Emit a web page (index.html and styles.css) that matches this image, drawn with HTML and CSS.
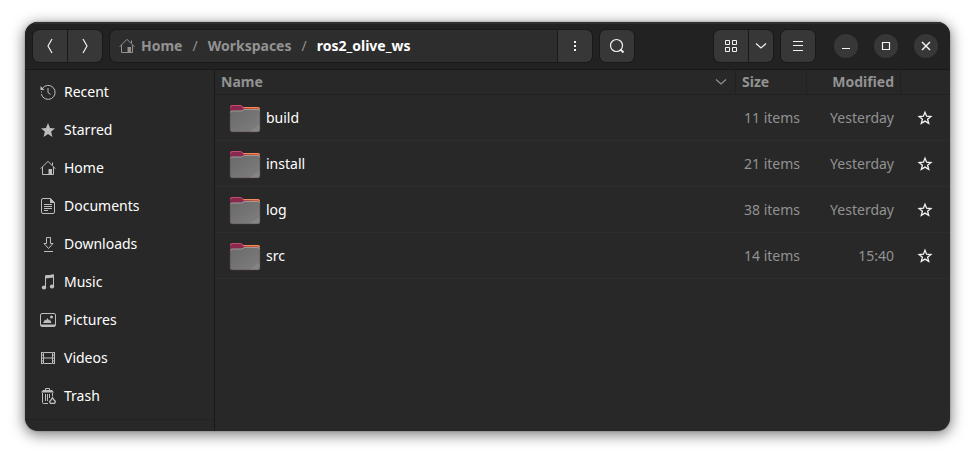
FILE: index.html
```html
<!DOCTYPE html>
<html lang="en">
<head>
<meta charset="utf-8">
<meta name="viewport" content="width=device-width, initial-scale=1">
<title>ros2_olive_ws</title>
<link rel="stylesheet" href="styles.css">
</head>
<body>
<svg class="defs" aria-hidden="true">
  <defs>
    <linearGradient id="flap" x1="0" x2="1"><stop offset="0" stop-color="#8b2850"/><stop offset=".4" stop-color="#b5384b"/><stop offset=".8" stop-color="#f0652f"/><stop offset="1" stop-color="#f0652f"/></linearGradient>
    <linearGradient id="front" x1="0" y1="0" x2="1" y2="1"><stop offset="0" stop-color="#696969"/><stop offset=".82" stop-color="#7b7b7b"/><stop offset=".83" stop-color="#858585"/><stop offset="1" stop-color="#858585"/></linearGradient>
    <symbol id="home" viewBox="0 0 16 16"><path d="M.7 8.700 8 1.300l7.300 7.400M2.500 7v7.500h11V7M12.500 5V2.500" fill="none" stroke="currentColor"/><path d="M8.500 9H12v5.500H8.500z" fill="currentColor"/></symbol>
    <symbol id="folder" viewBox="0 0 32 30"><path d="M1 4q0-2 2-2h8.500l3 2H29q2 0 2 2v20H1z" fill="url(#flap)"/><path d="M1 10V4q0-2 2-2h8.500l3 2-1 4H3z" fill="#8b2850"/><path d="M1.500 4.500q0-2 2-2h8l3 2" fill="none" stroke="#c0506c"/><path d="M14.500 4.500h14q2 0 2 2" fill="none" stroke="#f58a5c"/><path d="M1 9.500q0-2 2-2h9.500l3-1.500H29q2 0 2 2v19q0 2-2 2H3q-2 0-2-2z" fill="url(#front)" stroke="#543c43" stroke-width=".5"/><path d="M1.500 9.500Q1.500 8 3 8h9.500l3-1.500H29q1.500 0 1.500 1.500" fill="none" stroke="#a3979a"/></symbol>
    <symbol id="star" viewBox="0 0 16 16"><path d="m8 2.300 1.600 3.900 4.300.3-3.300 2.700 1.100 4.200L8 11.100l-3.700 2.300 1.100-4.200-3.300-2.700 4.300-.3z" fill="none" stroke="currentColor" stroke-width="1.300"/></symbol>
    <symbol id="down" viewBox="0 0 16 16"><path d="m3 5.500 5 4.500 5-4.500" fill="none" stroke="currentColor" stroke-width="1.200"/></symbol>
  </defs>
</svg>
<div class="window">
  <header class="toolbar">
    <div class="group">
      <button class="btn" aria-label="Back"><svg viewBox="0 0 16 16"><path d="M10 1 6 8l4 7" fill="none" stroke="currentColor" stroke-width="1.200"/></svg></button>
      <button class="btn" aria-label="Forward"><svg viewBox="0 0 16 16"><path d="m6 1 4 7-4 7" fill="none" stroke="currentColor" stroke-width="1.200"/></svg></button>
    </div>
    <div class="group location">
      <nav class="path" aria-label="Location">
        <a href="#home"><svg><use href="#home"/></svg>Home</a><span>/</span><a href="#workspaces">Workspaces</a><span>/</span><a href="#ws" class="current" aria-current="page">ros2_olive_ws</a>
      </nav>
      <button class="btn" aria-label="Folder menu"><svg viewBox="0 0 16 16"><path d="M7 3h2v2H7zM7 7h2v2H7zM7 11h2v2H7z" fill="currentColor"/></svg></button>
    </div>
    <div class="group"><button class="btn" aria-label="Search"><svg viewBox="0 0 16 16"><circle cx="7.500" cy="7.500" r="6" fill="none" stroke="currentColor" stroke-width="1.200"/><path d="m11.500 11.500 3 3" stroke="currentColor" stroke-width="1.800"/></svg></button></div>
    <div class="spacer"></div>
    <div class="group">
      <button class="btn" aria-label="Grid view"><svg viewBox="0 0 16 16"><path d="M2.500 2.500h4v4h-4zM9.500 2.500h4v4h-4zM2.500 9.500h4v4h-4zM9.500 9.500h4v4h-4z" fill="none" stroke="currentColor"/></svg></button>
      <button class="btn narrow" aria-label="View options"><svg><use href="#down"/></svg></button>
    </div>
    <div class="group"><button class="btn" aria-label="Main menu"><svg viewBox="0 0 16 16"><path d="M3 3.500h10M3 7.500h10M3 12.500h10" stroke="currentColor"/></svg></button></div>
    <div class="controls">
      <button class="round" aria-label="Minimize"><svg viewBox="0 0 16 16"><path d="M4 10.500h8" stroke="currentColor"/></svg></button>
      <button class="round" aria-label="Maximize"><svg viewBox="0 0 16 16"><path d="M4.500 4.500h7v7h-7z" fill="none" stroke="currentColor" stroke-width="1.200"/></svg></button>
      <button class="round" aria-label="Close"><svg viewBox="0 0 16 16"><path d="m4 4 8 8m0-8-8 8" stroke="currentColor" stroke-width="1.500"/></svg></button>
    </div>
  </header>
  <div class="content">
    <aside class="sidebar">
      <nav class="places" aria-label="Places">
        <a href="#recent"><svg viewBox="0 0 16 16"><path d="M2.300 4.500A7 7 0 1 1 1.300 10M8 4v4.500l2.500 2" fill="none" stroke="currentColor"/><path d="M.5 2v4h4z" fill="currentColor"/><path d="M1 8h1" stroke="currentColor"/></svg>Recent</a>
        <a href="#starred"><svg viewBox="0 0 16 16"><path d="m8 1 2 5 5 .4-3.900 3.200L12.400 15 8 12l-4.400 3 1.300-5.400L1 6.400 6 6z" fill="currentColor"/></svg>Starred</a>
        <a href="#home"><svg><use href="#home"/></svg>Home</a>
        <a href="#documents"><svg viewBox="0 0 16 16"><path d="M10.500.5H3a1.500 1.500 0 0 0-1.500 1.500v12A1.500 1.500 0 0 0 3 15.500h10a1.500 1.500 0 0 0 1.500-1.500V4.500zM4 6.500h8M4 8.500h8M4 10.500h8M4 12.500h4" fill="none" stroke="currentColor"/><path d="M10 0v5h5z" fill="currentColor"/></svg>Documents</a>
        <a href="#downloads"><svg viewBox="0 0 16 16"><path d="M6.500 1.500h4v6H13l-4.500 5L4 7.500h2.500zM4 15.500h9" fill="none" stroke="currentColor"/></svg>Downloads</a>
        <a href="#music"><svg viewBox="0 0 16 16"><path d="M5.500 13V2l8-1v11" fill="none" stroke="currentColor"/><path d="M5 1.500 14 .5v3L5 4.500z" fill="currentColor"/><ellipse cx="4" cy="13.500" rx="2.200" ry="1.900" fill="currentColor"/><ellipse cx="12" cy="12.500" rx="2.200" ry="1.900" fill="currentColor"/></svg>Music</a>
        <a href="#pictures"><svg viewBox="0 0 16 16"><rect x=".5" y="1.500" width="15" height="13" rx="1.500" fill="none" stroke="currentColor"/><path d="M1 12.500h14v2H1zM3 11l2-3.500 1 1L7.500 6l1.500 2.500 1-1 1.500 3.500z" fill="currentColor"/><circle cx="11.500" cy="5" r="1.500" fill="currentColor"/></svg>Pictures</a>
        <a href="#videos"><svg viewBox="0 0 16 16"><path d="M3.500 2.500h9v11h-9zM3.500 8h9" fill="none" stroke="currentColor"/><path d="M1.500 2v12M14.500 2v12" stroke="currentColor"/><path d="M2 2.500h1M2 5h1M2 8h1M2 11h1M2 13.500h1M13 2.500h1M13 5h1M13 8h1M13 11h1M13 13.500h1" stroke="currentColor"/></svg>Videos</a>
        <a href="#trash"><svg viewBox="0 0 16 16"><path d="M5.500 2.500v-2h4v2M2.500 5v9.500q0 1 1 1H8M12.500 5v3M5.500 6v7M7.500 6v7M9.500 6v4" fill="none" stroke="currentColor"/><path d="M1 4.500 3 2h9l2 2.500z" fill="currentColor"/><path d="m12.500 9.500 1.500 2.500 1.500 1.500-1 1.800h-4l-1-1.800L11 12z" fill="none" stroke="currentColor" stroke-width="1.300"/></svg>Trash</a>
      </nav>
    </aside>
    <main class="files">
      <table>
        <colgroup><col><col class="c-size"><col class="c-mod"><col class="c-star"></colgroup>
        <thead><tr><th scope="col"><div class="sort">Name<svg><use href="#down"/></svg></div></th><th scope="col">Size</th><th scope="col" class="right">Modified</th><th scope="col" aria-label="Starred"></th></tr></thead>
        <tbody>
          <tr><td><div class="file"><svg><use href="#folder"/></svg>build</div></td><td>11 items</td><td>Yesterday</td><td><button class="star" aria-label="Star build"><svg><use href="#star"/></svg></button></td></tr>
          <tr><td><div class="file"><svg><use href="#folder"/></svg>install</div></td><td>21 items</td><td>Yesterday</td><td><button class="star" aria-label="Star install"><svg><use href="#star"/></svg></button></td></tr>
          <tr><td><div class="file"><svg><use href="#folder"/></svg>log</div></td><td>38 items</td><td>Yesterday</td><td><button class="star" aria-label="Star log"><svg><use href="#star"/></svg></button></td></tr>
          <tr><td><div class="file"><svg><use href="#folder"/></svg>src</div></td><td>14 items</td><td>15:40</td><td><button class="star" aria-label="Star src"><svg><use href="#star"/></svg></button></td></tr>
        </tbody>
      </table>
    </main>
  </div>
</div>
</body>
</html>
```
FILE: styles.css
```css
* { box-sizing: border-box; }
body {
  margin: 0;
  min-height: 100vh;
  padding: 22px 25px 28px;
  display: flex;
  background: #fff;
  color: #fff;
  font: 14px/20px "Noto Sans", "Open Sans", sans-serif;
}
.defs { position: absolute; width: 0; height: 0; }
svg { display: block; flex: none; width: 16px; height: 16px; }
a { color: inherit; text-decoration: none; }
button { padding: 0; border: 0; font: inherit; color: #f2f2f2; }

.window {
  flex: 1;
  min-width: 0;
  display: flex;
  flex-direction: column;
  overflow: hidden;
  border-radius: 13px;
  background: #282828;
  box-shadow: 0 3px 14px 1px rgba(0, 0, 0, .5), 0 0 2px rgba(0, 0, 0, .3);
}
.toolbar {
  display: flex;
  align-items: center;
  gap: 6px;
  height: 48px;
  padding: 0 12px 0 7px;
  background: #222;
  border-bottom: 1px solid #191919;
  box-shadow: inset 0 2px #303030;
}
.group {
  display: flex;
  gap: 1px;
  height: 34px;
  border: 1px solid #191919;
  border-radius: 7px;
  background: #191919;
  overflow: hidden;
}
.btn {
  flex: none;
  width: 34px;
  display: grid;
  place-items: center;
  background: #373737;
}
.narrow { width: 24px; }
.location { flex: 0 1 484px; min-width: 0; }
.path {
  flex: 1;
  min-width: 0;
  display: flex;
  align-items: center;
  gap: 10px;
  padding-left: 9px;
  background: #2d2d2d;
  color: #929292;
  font-weight: 700;
  white-space: nowrap;
}
.path a { display: flex; align-items: center; gap: 6px; }
.path span { font-weight: 400; }
.path .current { color: #fff; }
.spacer { flex: 1; }
.controls { display: flex; gap: 16px; margin-left: 12px; }
.round {
  width: 24px;
  height: 24px;
  display: grid;
  place-items: center;
  border-radius: 50%;
  background: #373737;
}

.content { flex: 1; display: flex; min-height: 0; }
.sidebar {
  flex: none;
  width: 190px;
  padding: 3px 0 11px;
  border-right: 1px solid #191919;
}
.places { border-bottom: 1px solid #232323; padding-bottom: 4px; }
.places a {
  display: flex;
  align-items: center;
  gap: 8px;
  height: 38px;
  padding-left: 15px;
}
.places svg { color: #bebebe; }

.files { flex: 1; min-width: 0; }
table { width: 100%; table-layout: fixed; border-collapse: separate; border-spacing: 0; }
.c-size { width: 71px; }
.c-mod { width: 94px; }
.c-star { width: 49px; }
th {
  height: 25px;
  padding: 0 6px;
  border-right: 1px solid #212121;
  border-bottom: 1px solid #212121;
  color: #929292;
  text-align: left;
}
th:last-child { border-right: 0; }
.right { text-align: right; }
.sort { display: flex; align-items: center; justify-content: space-between; }
.sort svg { color: #929292; }
td {
  height: 46px;
  padding: 0 7px;
  border-bottom: 1px solid #2d2d2d;
  color: #929292;
  text-align: right;
  white-space: nowrap;
}
.file { display: flex; align-items: center; gap: 5px; padding-left: 7px; color: #fff; }
.file svg { width: 32px; height: 30px; }
.star { width: 34px; height: 32px; display: grid; place-items: center; background: none; }
```
